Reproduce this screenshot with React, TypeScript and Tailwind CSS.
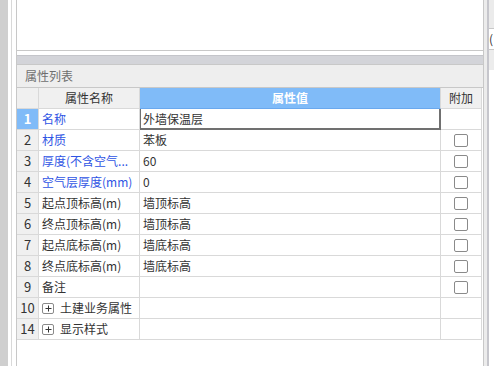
import React from "react";

type Row = {
  no: string;
  name: string;
  value: string;
  blue?: boolean;
  check?: boolean;
  group?: boolean;
};

const rows: Row[] = [
  { no: "1", name: "名称", value: "外墙保温层", blue: true },
  { no: "2", name: "材质", value: "苯板", blue: true, check: true },
  { no: "3", name: "厚度(不含空气...", value: "60", blue: true, check: true },
  { no: "4", name: "空气层厚度(mm)", value: "0", blue: true, check: true },
  { no: "5", name: "起点顶标高(m)", value: "墙顶标高", check: true },
  { no: "6", name: "终点顶标高(m)", value: "墙顶标高", check: true },
  { no: "7", name: "起点底标高(m)", value: "墙底标高", check: true },
  { no: "8", name: "终点底标高(m)", value: "墙底标高", check: true },
  { no: "9", name: "备注", value: "", check: true },
  { no: "10", name: "土建业务属性", value: "", group: true },
  { no: "14", name: "显示样式", value: "", group: true },
];

const cell = "h-[21px] border-r border-b border-[#d9d9d9] flex items-center";

function PlusBox() {
  return (
    <span className="w-[12px] h-[11px] border border-[#8a8a8a] rounded-[2px] flex items-center justify-center mr-[6px] bg-white">
      <svg width="7" height="7" viewBox="0 0 7 7">
        <path d="M0.5 3.5h6M3.5 0.5v6" stroke="#333" strokeWidth="1" />
      </svg>
    </span>
  );
}

export default function App() {
  return (
    <div
      className="w-[494px] h-[366px] flex bg-white overflow-hidden text-[12px] text-[#333]"
      style={{ fontFamily: '"Noto Sans CJK SC", "Noto Sans", sans-serif' }}
    >
      <div className="w-[8px] bg-[#cfcfcf]" />
      <div className="w-[3px]" />
      <div className="w-px bg-[#d9d9d9]" />
      <div className="w-[4px]" />

      <div className="w-[468px] border-l border-r border-[#c8c8c8] flex flex-col">
        <div className="h-[51px] border-b border-[#c8c8c8] bg-white" />
        <div className="h-[4px]" />
        <div className="h-[9px] border-t border-[#c4c5ca] bg-[#d3d4d9]" />
        <div className="h-[24px] border-t border-b border-[#c8c8c8] bg-[#eeeeee] flex items-center pl-[8px] text-[#6e6e6e]">
          属性列表
        </div>

        <div className="grid grid-cols-[22px_101px_301px_41px]">
          <div className={`${cell} bg-[#f0f0f0]`} />
          <div className={`${cell} bg-[#f0f0f0] justify-center`}>属性名称</div>
          <div className={`${cell} bg-[#80bbf8] border-b-[#6aa8ee] justify-center text-white font-bold`}>属性值</div>
          <div className={`${cell} bg-[#f0f0f0] justify-center`}>附加</div>

          {rows.map((r, i) => (
            <React.Fragment key={r.no}>
              <div
                className={`${cell} justify-center text-[13px] ${
                  i === 0 ? "bg-[#80bbf8] text-white font-bold" : "bg-[#f0f0f0]"
                }`}
              >
                {r.no}
              </div>
              <div
                className={`${cell} pl-[3px] whitespace-nowrap overflow-hidden ${
                  r.blue ? "text-[#2f55e4]" : ""
                }`}
              >
                {r.group && <PlusBox />}
                {r.name}
              </div>
              {i === 0 ? (
                <div className="h-[21px] border-l border-b-2 border-r-2 border-[#707070] flex items-center pl-[2px]">
                  {r.value}
                </div>
              ) : (
                <div className={`${cell} pl-[3px]`}>{r.value}</div>
              )}
              <div className={`${cell} justify-center`}>
                {r.check && (
                  <span className="w-[14px] h-[13px] border border-[#8a8a8a] rounded-[2px] bg-white" />
                )}
              </div>
            </React.Fragment>
          ))}
        </div>
      </div>

      <div className="w-[3px] bg-[#ececec]" />
      <div className="w-[2px] bg-[#c6c6cc]" />
      <div className="flex-1 flex flex-col">
        <div className="h-[29px] bg-[#ebebeb] border-b border-[#c8c8c8]" />
        <div className="h-[21px] bg-white border-b border-[#c8c8c8] text-[12px] leading-[20px] overflow-hidden">(</div>
        <div className="h-[20px] bg-[#ececec]" />
        <div className="flex-1 bg-white" />
      </div>
    </div>
  );
}
